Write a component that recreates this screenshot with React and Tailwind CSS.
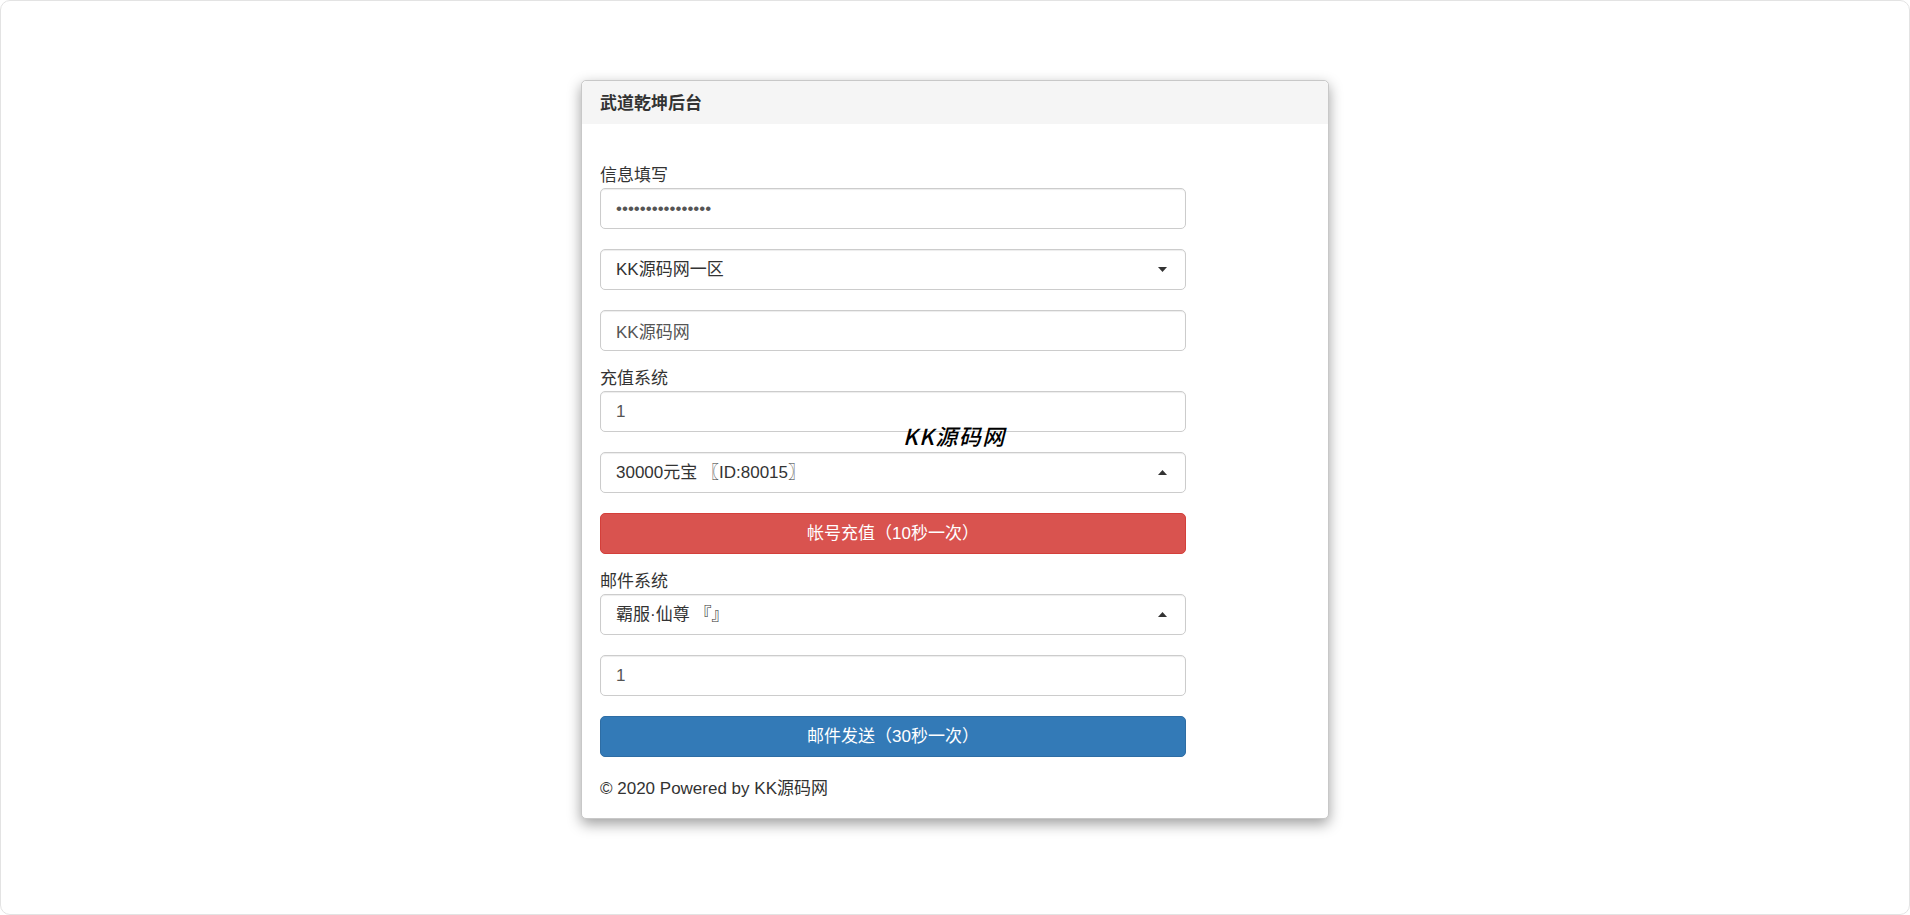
import React from 'react';

const FONT = { fontFamily: '"Liberation Sans", "Noto Sans CJK SC", Arial, sans-serif' };

function Arrow({ up }) {
  return (
    <svg width={9} height={5} viewBox="0 0 9 5" className="shrink-0">
      {up ? <polygon points="0,5 9,5 4.5,0" fill="#333" /> : <polygon points="0,0 9,0 4.5,5" fill="#333" />}
    </svg>
  );
}

function Field({ value, type = 'text', className = '' }) {
  return (
    <input
      type={type}
      readOnly
      value={value}
      className={`block w-[586px] h-[41px] px-[15px] border border-[#ccc] rounded-[5px] bg-white text-[17px] text-[#555] outline-none shadow-[inset_0_1px_1px_rgba(0,0,0,0.075)] ${className}`}
      style={FONT}
    />
  );
}

function Select({ value, up, className = '' }) {
  return (
    <div className={`flex items-center justify-between w-[586px] h-[41px] pl-[15px] pr-[18px] border border-[#ccc] rounded-[5px] bg-white text-[17px] text-[#333] shadow-[inset_0_1px_1px_rgba(0,0,0,0.075)] ${className}`}>
      <span>{value}</span>
      <Arrow up={up} />
    </div>
  );
}

function Label({ children, className = '' }) {
  return <div className={`h-[24px] leading-[24px] text-[17px] text-[#333] ${className}`}>{children}</div>;
}

function Button({ children, color, className = '' }) {
  const styles = color === 'red'
    ? 'bg-[#d9534f] border-[#d43f3a]'
    : 'bg-[#337ab7] border-[#2e6da4]';
  return (
    <button className={`flex items-center justify-center w-[586px] h-[41px] border rounded-[5px] text-white text-[17px] ${styles} ${className}`} style={FONT}>
      {children}
    </button>
  );
}

export default function App() {
  return (
    <div className="w-full h-[915px] bg-white border border-[#e3e3e3] rounded-[10px] pt-[79px]" style={FONT}>
      <div className="relative mx-auto w-[748px] bg-white border border-[#c8c8c8] rounded-[5px] shadow-[0_5px_14px_rgba(0,0,0,0.38)]">
        <div className="h-[43px] flex items-center pt-[3px] px-[18px] bg-[#f5f5f5] rounded-t-[5px] text-[17px] font-bold text-[#333]">
          武道乾坤后台
        </div>

        <div className="px-[18px] pt-[40px] pb-[17px]">
          <Label>信息填写</Label>
          <Field type="password" value="aaaaaaaaaaaaaaaa" />
          <Select value="KK源码网一区" className="mt-[20px]" />
          <Field value="KK源码网" className="mt-[20px]" />

          <Label className="mt-[16px]">充值系统</Label>
          <Field value="1" />
          <Select value="30000元宝 〖ID:80015〗" up className="mt-[20px]" />
          <Button color="red" className="mt-[20px]">帐号充值（10秒一次）</Button>

          <Label className="mt-[16px]">邮件系统</Label>
          <Select value="霸服·仙尊 『』" up />
          <Field value="1" className="mt-[20px]" />
          <Button color="blue" className="mt-[20px]">邮件发送（30秒一次）</Button>

          <div className="mt-[20px] h-[24px] leading-[24px] text-[17px] text-[#333]">© 2020 Powered by KK源码网</div>
        </div>

        <div className="absolute left-[321px] top-[338px] text-[22px] italic font-medium tracking-[1.5px] text-black" style={{ fontFamily: '"Noto Sans CJK SC", "Liberation Sans", sans-serif' }}>
          KK源码网
        </div>
      </div>
    </div>
  );
}
